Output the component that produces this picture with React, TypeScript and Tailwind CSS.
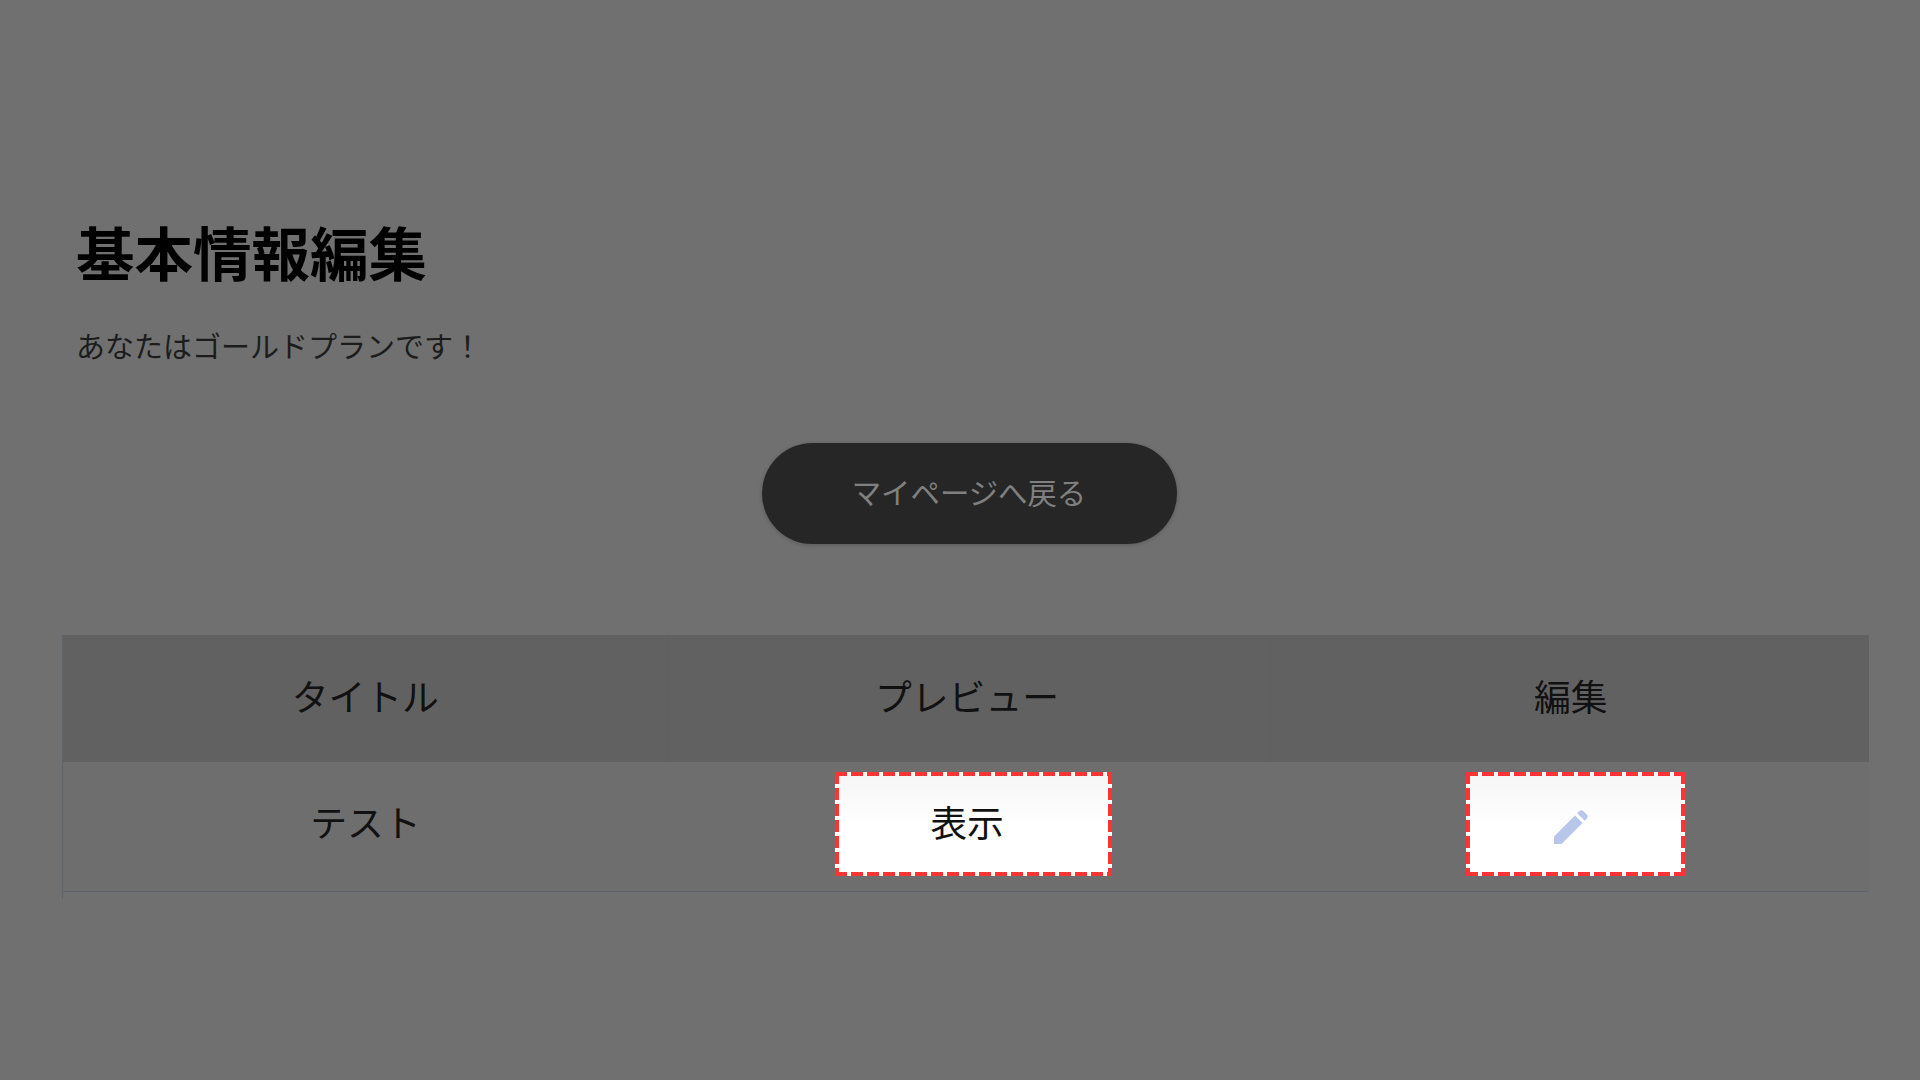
const font = { fontFamily: '"Noto Sans CJK JP", "Liberation Sans", sans-serif' };

// red dashes are 12px on, 4px off; the stock dashed border comes out too short
const dashed =
  '[background:linear-gradient(90deg,#ff3333_12px,#fff_0)_0_0/16px_4px_repeat-x,linear-gradient(90deg,#ff3333_12px,#fff_0)_0_100%/16px_4px_repeat-x,linear-gradient(#ff3333_12px,#fff_0)_0_0/4px_16px_repeat-y,linear-gradient(#ff3333_12px,#fff_0)_100%_0/4px_16px_repeat-y,linear-gradient(#f5f5f5,#ffffff_50%)]';

function PencilIcon() {
  return (
    <svg width="36" height="36" viewBox="0 0 36 36" aria-hidden="true">
      <path d="M1 27.5 L22 6.5 L29.5 14 L8.5 35 L1 35 Z" fill="#b8c6e9" />
      <path d="M24.2 4.3 L26.5 2 C27.6 .9 29 .9 30.1 2 L33.9 5.8 C35 6.9 35 8.3 33.9 9.4 L31.7 11.7 Z" fill="#b8c6e9" />
    </svg>
  );
}

export default function App() {
  return (
    <main className="min-h-screen bg-[#707070] pl-[62px] pr-[51px] pt-[212px]" style={font}>
      <div className="pl-[14px]">
        <h1 className="text-[58.5px] leading-[78px] font-bold text-black">基本情報編集</h1>
        <p className="mt-[35px] text-[29px] leading-[40px] text-[#1c1c1c]">あなたはゴールドプランです！</p>
      </div>

      <div className="mt-[78px] flex justify-center pl-[7px]">
        <a className="flex h-[101px] w-[415px] items-center justify-center rounded-full bg-[#262626] pb-[5px] text-[29.4px] text-[#808080] shadow-[0_1px_4px_rgba(0,0,0,0.2)]">
          マイページへ戻る
        </a>
      </div>

      <div className="mt-[91px] border-l border-[#5f636b] pb-[7px]">
        <table className="w-full table-fixed border-collapse text-[36.8px] text-[#111111]">
          <thead>
            <tr className="h-[127px] bg-[#616161]">
              <th className="w-[605px] pb-[6px] font-normal">タイトル</th>
              <th className="w-[602px] border-x border-[#5f5f5f] pb-[6px] pr-1 font-normal">プレビュー</th>
              <th className="pb-[6px] pl-[2px] font-normal">編集</th>
            </tr>
          </thead>
          <tbody>
            <tr className="border-b border-[#5f636b] bg-[#6e6e6e]">
              <td className="pb-[9px] text-center">テスト</td>
              <td className="pt-[10px] pb-[15px]">
                <a className={`ml-[167px] flex h-[104px] w-[277px] items-center justify-center pr-[13px] pb-1 text-[#111111] ${dashed}`}>
                  表示
                </a>
              </td>
              <td className="pt-[10px] pb-[15px]">
                <a className={`ml-[196px] flex h-[104px] w-[219px] items-center justify-center pr-[10px] pt-[6px] ${dashed}`}>
                  <PencilIcon />
                </a>
              </td>
            </tr>
          </tbody>
        </table>
      </div>
    </main>
  );
}
